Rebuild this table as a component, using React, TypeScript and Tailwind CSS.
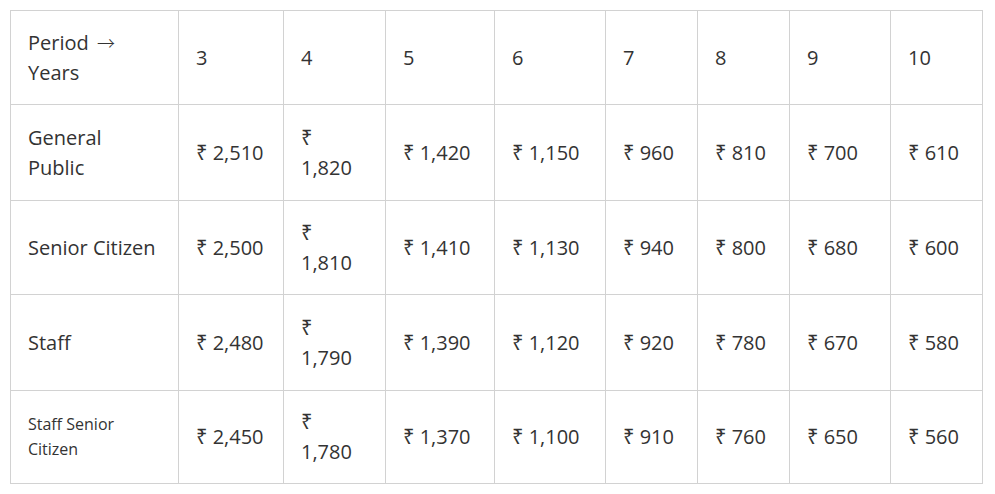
import React from "react";

const colClasses = [
  "w-[168px]",
  "w-[105px]",
  "w-[102px]",
  "w-[109px]",
  "w-[111px]",
  "w-[92px]",
  "w-[92px]",
  "w-[101px]",
  "w-[92px]",
];

type Row = { label: string; small?: boolean; h: string; vals: string[] };

const rows: Row[] = [
  { label: "General Public", h: "h-[96px]", vals: ["2,510", "1,820", "1,420", "1,150", "960", "810", "700", "610"] },
  { label: "Senior Citizen", h: "h-[94px]", vals: ["2,500", "1,810", "1,410", "1,130", "940", "800", "680", "600"] },
  { label: "Staff", h: "h-[96px]", vals: ["2,480", "1,790", "1,390", "1,120", "920", "780", "670", "580"] },
  { label: "Staff Senior Citizen", small: true, h: "h-[93px]", vals: ["2,450", "1,780", "1,370", "1,100", "910", "760", "650", "560"] },
];

const cell = "border border-[#d2d2d2] px-[17px] align-middle";

export default function App() {
  return (
    <div className="w-[995px] h-[494px] bg-white pl-[10px] pt-[10px] text-[#333333] font-['Open_Sans','Noto_Sans',sans-serif]">
      <table className="table-fixed border-collapse w-[972px] text-[20px] leading-[30px]">
        <colgroup>
          {colClasses.map((c, i) => (
            <col key={i} className={c} />
          ))}
        </colgroup>
        <tbody>
          <tr className="h-[94px]">
            <td className={cell}>
              Period{" "}
              <span className="ml-[3px] font-['Noto_Sans_CJK_JP',sans-serif] text-[18px] font-light">→</span>
              <br />
              Years
            </td>
            {["3", "4", "5", "6", "7", "8", "9", "10"].map((v) => (
              <td key={v} className={cell}>
                {v}
              </td>
            ))}
          </tr>
          {rows.map((r, ri) => (
            <tr key={ri} className={r.h}>
              <td className={r.small ? cell + " text-[16px] leading-[25px]" : cell}>{r.label}</td>
              {r.vals.map((v, ci) => (
                <td key={ci} className={cell + " whitespace-nowrap"}>
                  {ci === 1 ? (
                    <>
                      ₹<br />
                      {v}
                    </>
                  ) : (
                    <>₹ {v}</>
                  )}
                </td>
              ))}
            </tr>
          ))}
        </tbody>
      </table>
    </div>
  );
}
